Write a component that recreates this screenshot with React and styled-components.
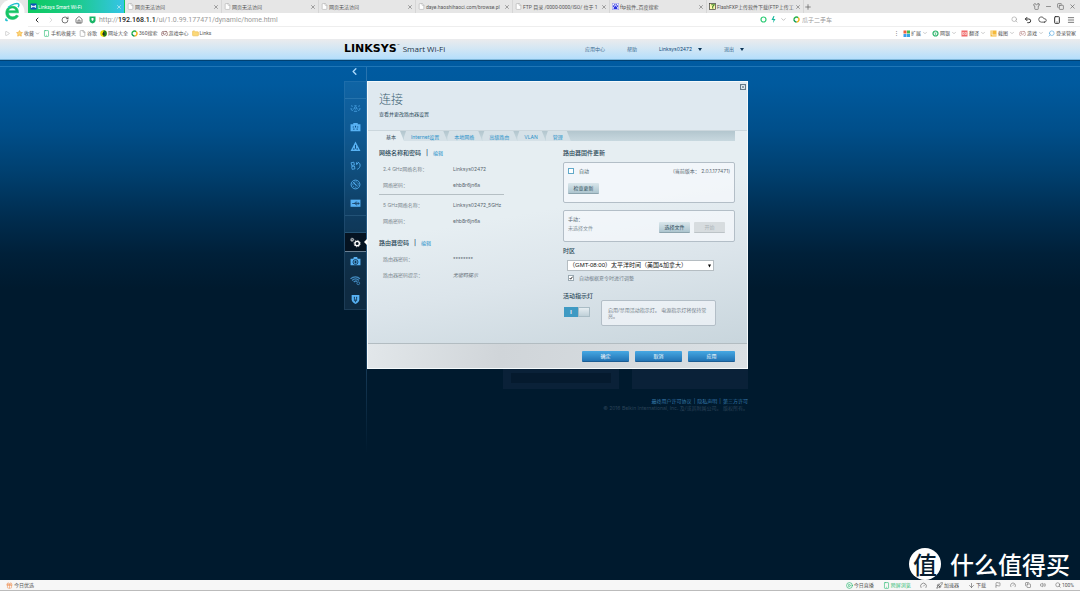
import React, { useState } from "react";
import styled, { createGlobalStyle } from "styled-components";
import {
  ChevronLeft,
  ChevronRight,
  ChevronDown,
  RotateCw,
  House,
  Search,
  Undo2,
  Cloud,
  Smartphone,
  Menu,
  Minus,
  X,
  Plus,
  Copy,
  Shirt,
  File,
  Folder,
  Gift,
  CirclePlay,
  Gauge,
  Rocket,
  ArrowDown,
  Flag,
  Volume2,
  Gamepad2,
  Star,
  Triangle
} from "lucide-react";

const GlobalStyle = createGlobalStyle`
  * {
    box-sizing: border-box;
  }
  body {
    margin: 0;
    font-family: Inter, "Liberation Sans", "Noto Sans CJK SC", sans-serif;
    font-size: 5px;
    line-height: 8px;
  }
  h1, h2, p, dl, dd {
    margin: 0;
  }
  button, input, select {
    font: inherit;
    color: inherit;
    margin: 0;
    padding: 0;
    border: 0;
    background: none;
  }
  a {
    color: inherit;
    text-decoration: none;
  }
  svg {
    display: block;
    flex: none;
  }
`;

const Window = styled.div`
  min-height: 100vh;
  display: flex;
  flex-direction: column;
`;

/* ---------- browser ---------- */

const Chrome = styled.div`
  display: grid;
  grid-template-columns: 28px minmax(0, 1fr);
  background: #fff;
  color: #555;
  font-family: Roboto, "Noto Sans CJK SC", sans-serif;
`;
const BrowserLogo = styled.div`
  grid-row: span 2;
  background: linear-gradient(#e6e6e6 13px, #fff 13px);
  svg {
    width: 26px;
    height: 26px;
  }
`;
const TabBar = styled.div`
  display: flex;
  align-items: center;
  height: 13px;
  min-width: 0;
  background: #e6e6e6;
`;
const Tab = styled.div`
  flex: 0 1 97px;
  min-width: 0;
  height: 13px;
  display: flex;
  align-items: center;
  gap: 1px;
  padding: 0 2px;
  border-right: 1px solid ${p => (p.$active ? "transparent" : "#d6d6d6")};
  color: ${p => (p.$active ? "#fff" : "#555")};
  background: ${p =>
    p.$active ? "linear-gradient(90deg, #0dc95f, #1bcb8a 50%, #35c4e8)" : "none"};
  a {
    flex: 1;
    min-width: 0;
    white-space: nowrap;
  }
`;
const IconButton = styled.button`
  display: flex;
  align-items: center;
  color: ${p => p.$color || "inherit"};
`;
const WindowButtons = styled.div`
  display: flex;
  gap: 5px;
  margin-left: auto;
  padding-right: 4px;
`;
const AddressBar = styled.div`
  display: flex;
  align-items: center;
  gap: 6px;
  height: 14px;
  padding: 0 5px;
  border-bottom: 1px solid #eee;
  color: #333;
`;
const Url = styled.div`
  flex: 1;
  font-size: 7px;
  color: #999;
  white-space: nowrap;
  margin-left: -3px;
  b {
    color: #222;
    font-weight: 500;
  }
`;
const SearchBox = styled.label`
  display: flex;
  align-items: center;
  gap: 2px;
  width: 225px;
  font-size: 6px;
  input {
    flex: 1;
    min-width: 0;
    height: 10px;
    outline: 0;
    &::placeholder {
      color: #999;
      opacity: 1;
    }
  }
`;
const Bookmarks = styled.nav`
  grid-column: 1 / -1;
  display: flex;
  align-items: center;
  gap: 3px;
  height: 12px;
  padding: 0 4px 0 5px;
`;
const Expander = styled(IconButton)`
  width: 8px;
`;
const Bookmark = styled.a`
  display: flex;
  align-items: center;
  gap: 1px;
  white-space: nowrap;
`;
const Tools = styled.div`
  display: flex;
  align-items: center;
  gap: 4px;
  margin-left: auto;
`;
const StatusBar = styled.footer`
  display: flex;
  align-items: center;
  gap: 9px;
  height: 11px;
  padding: 0 6px;
  background: #f7f7f7;
  border-bottom: 1px solid #bbb;
  color: #555;
  font-family: Roboto, "Noto Sans CJK SC", sans-serif;
`;
const StatusItem = styled.button`
  display: flex;
  align-items: center;
  gap: 1px;
  color: ${p => p.$color || "inherit"};
  margin-right: ${p => (p.$push ? "auto" : 0)};
`;

/* ---------- router page ---------- */

const Page = styled.main`
  position: relative;
  flex: 1;
  display: flex;
  flex-direction: column;
  background: linear-gradient(
    #005ca5 0,
    #005a9e 45px,
    #004f8b 90px,
    #003f6e 135px,
    #002c4e 180px,
    #002039 215px,
    #001a2e 250px
  );
`;
const SiteHeader = styled.header`
  background: linear-gradient(#ebebed, #d2e6f4 50%, #b4defc);
  border-bottom: 1px solid #7fb8dc;
`;
const Shell = styled.div`
  width: 100%;
  max-width: 416px;
  margin: 0 auto;
  padding-left: 12px;
`;
const HeaderRow = styled(Shell)`
  display: flex;
  align-items: center;
  height: 20px;
`;
const Brand = styled.a`
  display: flex;
  align-items: baseline;
  gap: 3px;
  color: #1d3347;
  font: 8px/12px "Open Sans", sans-serif;
  white-space: nowrap;
  b {
    color: #000;
    font: bold 11px/12px "DejaVu Sans", sans-serif;
  }
  sup {
    font: 3px/3px "Liberation Sans", sans-serif;
    vertical-align: 6px;
  }
`;
const UserNav = styled.nav`
  display: flex;
  align-items: center;
  gap: 22px;
  margin-left: auto;
  padding-right: 4px;
  color: #3c6d92;
`;
const NavMenu = styled.button`
  display: flex;
  align-items: center;
  gap: 6px;
  color: ${p => (p.$strong ? "#134a78" : "inherit")};
  &::after {
    content: "";
    border: 2px solid transparent;
    border-top: 3px solid #0b3557;
    border-bottom: 0;
  }
`;
const Rule = styled.div`
  height: 7px;
  border-bottom: 1px solid rgba(90, 170, 220, 0.35);
  border-top: 1px solid #014273;
`;
const Layout = styled(Shell)`
  display: grid;
  grid-template-columns: 23px minmax(0, 1fr);
  min-height: 386px;
`;
const Side = styled.aside`
  border-right: 1px solid;
  border-image: linear-gradient(rgba(80, 140, 190, 0.5) 60%, transparent) 1;
`;
const BackButton = styled.button`
  display: flex;
  width: 100%;
  height: 14px;
  padding: 0 0 6px 5px;
  align-items: center;
  color: #a9d8fb;
`;
const SideMenu = styled.nav`
  display: flex;
  flex-direction: column;
  padding: 16px 0 0;
  background: rgba(120, 170, 215, 0.12);
  border: 1px solid rgba(120, 170, 215, 0.14);
  border-right: 0;
`;
const SideGroup = styled.div`
  border-top: 1px solid rgba(120, 180, 220, 0.22);
  border-bottom: ${p => (p.$closed ? "1px solid rgba(120, 180, 220, 0.18)" : 0)};
  padding-bottom: ${p => (p.$closed ? "2px" : 0)};
  margin-bottom: ${p => (p.$closed ? "16px" : 0)};
`;
const SideLink = styled.a`
  display: flex;
  align-items: center;
  justify-content: center;
  position: relative;
  height: 19px;
  color: ${p => (p.$active ? "#fff" : "#58b2f4")};
  background: ${p => (p.$active ? "#051321" : "none")};
  border-bottom: ${p => (p.$active ? "1px solid #6c8295" : 0)};
  &::after {
    content: "";
    display: ${p => (p.$active ? "block" : "none")};
    position: absolute;
    right: -1px;
    border: 3px solid transparent;
    border-right-color: #fff;
    border-left: 0;
  }
  svg {
    width: 11px;
    height: 11px;
  }
`;

const Dialog = styled.section`
  margin-top: 14px;
  border: 1px solid #f5fafc;
  background: linear-gradient(170deg, #e6eef2 45%, #dce5eb 65%, #c9d6dd 92%);
  color: #5a6972;
`;
const DialogHead = styled.div`
  display: flex;
  justify-content: space-between;
  align-items: flex-start;
  height: 49px;
  padding: 1px 1px 0 11px;
  background: #dfe9f0;
  border-bottom: 1px solid #ccd7dd;
  h1 {
    margin-top: 8px;
    color: #3d6273;
    font: 300 12px/16px "Noto Sans CJK SC", sans-serif;
  }
  p {
    margin-top: 3px;
    color: #304d5c;
  }
`;
const CloseButton = styled.button`
  width: 6px;
  height: 6px;
  margin-top: 1px;
  border: 1px solid #647988;
  color: #405564;
  display: flex;
  align-items: center;
  justify-content: center;
`;
const DialogTabs = styled.div`
  display: flex;
  height: 10px;
  margin: 0 12px 0 11px;
  background: linear-gradient(#b3c6ce, #c8d8df);
`;
const DialogTab = styled.button`
  padding: 2px 8px 0 7px;
  line-height: 8px;
  white-space: nowrap;
  color: ${p => (p.$active ? "#3b5361" : "#2a92ca")};
  background: ${p => (p.$active ? "#e6eef2" : "#d6e1e7")};
  clip-path: polygon(
    ${p => (p.$active ? 0 : 2)}px 0,
    calc(100% - 4px) 0,
    100% 100%,
    0 100%,
    0 6px
  );
`;
const DialogBody = styled.div`
  display: grid;
  grid-template-columns: 184px minmax(0, 1fr);
  padding: 7px 12px 17px 11px;
`;
const Title = styled.h2`
  display: flex;
  gap: 5px;
  margin-top: ${p => p.$top || 0}px;
  color: #294757;
  font-size: 6px;
  font-weight: 500;
  line-height: 10px;
  white-space: nowrap;
  a {
    font-size: 5px;
    font-weight: 400;
    color: #1d8fc8;
  }
`;
const Fields = styled.dl`
  display: grid;
  grid-template-columns: 70px 1fr;
  width: 125px;
  margin-top: ${p => (p.$divided ? 2 : 3)}px;
  padding-left: 4px;
  line-height: 16px;
  white-space: nowrap;
  color: #7d8990;
  dd {
    color: #59666f;
  }
`;
const Divider = styled.hr`
  width: 125px;
  margin: 1px 0 0;
  border: 0;
  border-top: 1px solid #b5bfc4;
`;
const Box = styled.div`
  padding: 4px 4px 8px;
  border: 1px solid #b3bec7;
  border-radius: 2px;
  background: rgba(250, 252, 255, 0.6);
  margin-top: ${p => p.$top}px;
`;
const Row = styled.div`
  display: flex;
  align-items: ${p => (p.$bottom ? "flex-end" : "center")};
  gap: 4px;
`;
const Check = styled.label`
  display: flex;
  align-items: center;
  gap: 5px;
  color: ${p => (p.$soft ? "#74818a" : "#4d5f6b")};
  margin: ${p => (p.$soft ? "3px 0 0 5px" : 0)};
  input {
    appearance: none;
    width: 6px;
    height: 6px;
    border: 1px solid ${p => (p.$soft ? "#9aa9b2" : "#62a9c9")};
    background: #fff;
    &:checked {
      background: #fff
        url("data:image/svg+xml,%3Csvg xmlns='http://www.w3.org/2000/svg' viewBox='0 0 6 6'%3E%3Cpath d='M1 3l1.5 1.8L5.4 1' fill='none' stroke='%23000' stroke-width='1.2'/%3E%3C/svg%3E");
    }
  }
`;
const Version = styled.span`
  margin-left: auto;
`;
const SmallButton = styled.button`
  width: 31px;
  height: 11px;
  line-height: 10px;
  color: #2c4b59;
  background: linear-gradient(#d9e6eb, #adc5cf);
  border-bottom: 1px solid #8ca4ae;
  border-radius: 1px;
  &:disabled {
    color: #adb5b9;
    background: #d7dcdf;
    border-color: #bcc3c7;
  }
`;
const CheckUpdate = styled(SmallButton)`
  display: block;
  margin-top: 8px;
`;
const FileState = styled.div`
  flex: 1;
  line-height: 9px;
  color: #86929a;
  p:first-child {
    color: #526570;
  }
`;
const FileButtons = styled(Row)`
  padding-right: 5px;
`;
const ZoneSelect = styled.select`
  display: block;
  width: 147px;
  height: 11px;
  margin: 4px 0 0 4px;
  padding: 0 8px 0 1px;
  appearance: none;
  font-family: "Liberation Sans", "Noto Sans CJK SC", sans-serif;
  font-size: 6px;
  line-height: 9px;
  color: #111;
  border: 1px solid #b5bdc2;
  background: #fff
    url("data:image/svg+xml,%3Csvg xmlns='http://www.w3.org/2000/svg' viewBox='0 0 4 4'%3E%3Cpath d='M0 0h4l-2 4z'/%3E%3C/svg%3E")
    no-repeat right 2px center / 3px 4px;
`;
const LightRow = styled.div`
  display: grid;
  grid-template-columns: 38px 115px;
  margin-top: 9px;
`;
const Toggle = styled.button`
  display: flex;
  width: 26px;
  height: 10px;
  margin: 6px 0 0 1px;
  color: #fff;
  font-weight: 700;
  line-height: 10px;
  background: #3f9ac3;
  span {
    flex: 1;
  }
  i {
    width: 12px;
    height: 10px;
    border: 1px solid #a9bcc5;
    background: linear-gradient(#e5edf1, #bfd0d8);
  }
`;
const Hint = styled(Box)`
  padding: 6px;
  line-height: 6px;
  color: #74818a;
`;
const DialogFoot = styled.div`
  display: flex;
  justify-content: flex-end;
  gap: 6px;
  padding: 7px 12px 6px;
  border-top: 1px solid #b2bcc1;
  background: linear-gradient(100deg, #e2e7ea, #d0d5d9 35%, #dae0e4);
`;
const ActionButton = styled.button`
  width: 47px;
  height: 11px;
  color: #fff;
  line-height: 10px;
  border-radius: 1px;
  background: linear-gradient(#46a8e3, #2274b5);
  border-bottom: 1px solid #1b5d94;
`;
const Cards = styled.div`
  display: flex;
  justify-content: flex-end;
  gap: 13px;
  height: 20px;
`;
const Card = styled.div`
  width: 116px;
  padding: 4px 8px;
  background: #0a2138;
  &::after {
    content: "";
    display: block;
    height: 10px;
    background: ${p => (p.$bar ? "#051a2e" : "none")};
  }
`;
const Legal = styled.div`
  margin-top: 9px;
  text-align: right;
  line-height: 7px;
  color: #2b4358;
  nav {
    display: flex;
    justify-content: flex-end;
    gap: 2px;
    color: #3577a9;
  }
`;
const Watermark = styled.div`
  position: absolute;
  right: 10px;
  bottom: 0;
  display: flex;
  align-items: center;
  gap: 9px;
  color: #fff;
  font: 500 24px/32px "Noto Sans CJK SC", sans-serif;
  span {
    width: 32px;
    height: 32px;
    border-radius: 50%;
    background: #fff;
    color: #071c2f;
    text-align: center;
    line-height: 31px;
  }
`;

/* ---------- icons ---------- */

const ELogo = () => (
  <svg viewBox="0 0 26 26">
    <circle cx="12" cy="12" r="12.5" fill="#fff" />
    <path
      d="M18.5 12.8H8.4c.2 2.6 2 4 4.3 4 1.6 0 2.7-.5 3.5-1.7l2.2.8c-1.2 2.3-3.2 3.5-5.9 3.5-4 0-6.7-2.7-6.7-6.7 0-3.8 2.7-6.5 6.5-6.5 4 0 6.4 2.6 6.2 6.6zM8.6 10.7h7.1c-.3-1.8-1.5-2.7-3.4-2.7-1.9 0-3.2 1-3.7 2.7z"
      fill="#16c566"
      stroke="#16c566"
      strokeWidth=".6"
    />
    <path
      d="M6.5 18.5c-1.4 1.5-.8 2.4 1.2 1.7M8 7.5c4-3.6 9.5-5 10.7-3.4.5.8.2 1.9-.7 3.2"
      fill="none"
      stroke="#20bfd0"
      strokeWidth="1.5"
    />
  </svg>
);
const Dot = ({ color, children }) => (
  <svg width="7" height="7" viewBox="0 0 14 14">
    <circle cx="7" cy="7" r="5" fill="none" stroke={color} strokeWidth="2.4" />
    {children}
  </svg>
);
const Ring360 = () => (
  <svg width="7" height="7" viewBox="0 0 14 14" fill="none" strokeWidth="3">
    <path d="M2 7a5 5 0 0 1 8.5-3.5" stroke="#29b34a" />
    <path d="M10.5 3.5A5 5 0 0 1 7 12" stroke="#f6b51e" />
    <path d="M7 12a5 5 0 0 1-5-5" stroke="#19a05c" />
  </svg>
);
const Shield = () => (
  <svg width="7" height="8" viewBox="0 0 14 16">
    <path d="M1 1h12v8c0 3-3 5-6 6-3-1-6-3-6-6z" fill="#18b566" />
    <path d="M5 4h4v4L7 10 5 8z" fill="#fff" />
  </svg>
);
const Square = ({ color, children }) => (
  <svg width="7" height="7" viewBox="0 0 14 14">
    <rect x="1" y="1" width="12" height="12" fill={color} />
    {children}
  </svg>
);
const HiLink = () => (
  <Square color="#0b53b8">
    <path d="M3 4v6M11 4v6M5.5 5v4M8.5 5v4M3 7h8" fill="none" stroke="#fff" strokeWidth="1.5" />
  </Square>
);
const Paw = () => (
  <svg width="7" height="7" viewBox="0 0 16 16" fill="#2932e1">
    <rect x=".5" y=".5" width="15" height="15" rx="1" fill="#fff" stroke="#2932e1" />
    <ellipse cx="3.5" cy="7" rx="1.5" ry="2" />
    <ellipse cx="6.3" cy="4" rx="1.4" ry="2" />
    <ellipse cx="9.8" cy="4" rx="1.4" ry="2" />
    <ellipse cx="12.5" cy="7" rx="1.5" ry="2" />
    <path d="M8 7c2 0 5 3.5 4.5 5.5-.5 2-3 1-4.5 1s-4 1-4.5-1C3 10.5 6 7 8 7z" />
  </svg>
);
const FlashIcon = () => (
  <svg width="7" height="7" viewBox="0 0 16 16">
    <rect x="1" y="1" width="14" height="14" fill="#fff8b0" stroke="#333" strokeWidth="1.5" />
    <path d="M5 4h7L8 9l1 4" fill="none" stroke="#4b8e2a" strokeWidth="2.5" />
  </svg>
);
const HaoIcon = () => (
  <svg width="7" height="7" viewBox="0 0 14 14">
    <circle cx="7" cy="7" r="6.5" fill="#f0dc00" />
    <path d="M7 .5a6.5 6.5 0 0 1 0 13V9z" fill="#1e7a1e" />
    <path d="M4 8h6M7 4v7" stroke="#222" strokeWidth="1.8" />
  </svg>
);
const AppsIcon = () => (
  <svg width="7" height="7" viewBox="0 0 14 14">
    <rect width="6" height="6" x="1" y="1" fill="#f0603c" />
    <rect width="6" height="6" x="8" y="1" fill="#45b94e" />
    <rect width="6" height="6" x="1" y="8" fill="#3c9fec" />
    <rect width="6" height="6" x="8" y="8" fill="#38a5e6" />
  </svg>
);

const sideIcons = {
  devices: (
    <g fill="none" stroke="currentColor" strokeWidth="1.5" opacity=".85">
      <circle cx="10" cy="9" r="2" />
      <path d="M5 6L2 5M2 9v3l3 2M15 6l3-1M18 9v3l-3 2M7 15h6M8 5h4M5 11h2M13 11h2" />
    </g>
  ),
  guest: (
    <g>
      <path d="M1 4h5V2h8v2h5v13H1z" fill="currentColor" />
      <path d="M5 8h2v2H5zM9 7h2v3H9zM13 8h2v2h-2zM6 12h2v2H6zM12 12h2v2h-2z" fill="#0b4d84" />
    </g>
  ),
  parental: (
    <g>
      <path d="M10 1l9 17H1z" fill="currentColor" />
      <path d="M10 7v7M7 16v-3M13 16v-3" stroke="#063e6d" strokeWidth="1.6" />
    </g>
  ),
  media: (
    <g fill="none" stroke="currentColor" strokeWidth="1.5">
      <path d="M2 5l5-1 1 5-5 1zM3 12l5-1 1 5-5 1z" />
      <path d="M12 4v4l3-3M14 4c4 1 5 4 4 8-1 3-3 4-5 5M11 7h3" />
    </g>
  ),
  speed: (
    <g fill="none" stroke="currentColor" strokeWidth="1.6">
      <circle cx="10" cy="10" r="8" />
      <circle cx="10" cy="10" r="5" strokeDasharray="2 1.5" />
      <path d="M6 6l6 6" strokeWidth="2" />
    </g>
  ),
  usb: (
    <g>
      <path d="M1 3h18v13H1z" fill="currentColor" />
      <path
        d="M4 10h12M8 10l2-2.5h3M9 10l2 2.5h2M14 8l3 2-3 2"
        stroke="#10304e"
        strokeWidth="1.3"
        fill="none"
      />
    </g>
  ),
  gears: (
    <g fill="none" stroke="currentColor">
      <circle cx="13" cy="12" r="4" strokeWidth="2.5" />
      <circle cx="13" cy="12" r="5.8" strokeWidth="1.5" strokeDasharray="2 2.55" />
      <circle cx="4" cy="5" r="2" strokeWidth="1.5" />
      <circle cx="4" cy="5" r="3.2" strokeWidth="1" strokeDasharray="1.3 1.2" />
    </g>
  ),
  trouble: (
    <g>
      <path d="M1 5h5l1-3h6l1 3h5v12H1z" fill="currentColor" />
      <circle cx="10" cy="11" r="4.5" fill="none" stroke="#0b2c47" strokeWidth="1.5" />
      <path d="M10 8.5v5M7.5 11h5" stroke="#0b2c47" strokeWidth="1.6" />
    </g>
  ),
  wireless: (
    <g fill="none" stroke="currentColor" strokeWidth="2.4" opacity=".7">
      <path d="M1 7c5-5 13-5 17 0M4 10c3-4 9-4 12 0M7 13c1-2 4-3 6-1" />
      <circle cx="15" cy="15" r="2.5" strokeWidth="1.6" />
    </g>
  ),
  security: (
    <g>
      <path d="M3 2h14v8c0 4-4 7-7 8-3-1-7-4-7-8z" fill="currentColor" />
      <path d="M8 6v7M12 6v7M7 6h2M11 6h2M10 10v5" stroke="#0b2c47" strokeWidth="1.4" />
    </g>
  )
};
const SideItem = ({ name, label, active }) => (
  <SideLink href="#" $active={active} aria-label={label}>
    <svg viewBox="0 0 20 20">{sideIcons[name]}</svg>
  </SideLink>
);

/* ---------- data ---------- */

const tabs = [
  { text: "Linksys Smart Wi-Fi", icon: <HiLink />, active: true },
  { text: "网页无法访问" },
  { text: "网页无法访问" },
  { text: "网页无法访问" },
  { text: "daye.haoshihaoci.com/browse.pl" },
  { text: "FTP 目录 /0000-0000/ISO/ 位于 1" },
  { text: "ftp软件_百度搜索", icon: <Paw /> },
  { text: "FlashFXP上传软件下载(FTP上传工", icon: <FlashIcon /> }
];
const bookmarks = [
  { text: "手机收藏夹", icon: <Smartphone size={7} color="#1fb86c" /> },
  { text: "谷歌", icon: <File size={7} color="#999" /> },
  { text: "网址大全", icon: <HaoIcon /> },
  { text: "360搜索", icon: <Ring360 /> },
  { text: "游戏中心", icon: <Gamepad2 size={7} color="#7b4a4a" /> },
  { text: "Links", icon: <Folder size={7} color="#e8b84a" fill="#fcd978" /> }
];
const tools = [
  { text: "扩展", icon: <AppsIcon /> },
  {
    text: "网银",
    icon: (
      <Dot color="#2cb56b">
        <path d="M5 4l2 3 2-3M7 7v4M5 8h4" stroke="#2cb56b" fill="none" />
      </Dot>
    )
  },
  {
    text: "翻译",
    icon: (
      <Square color="#f06a6a">
        <path d="M3 5h3v4H3zM8 5h3v4H8z" fill="none" stroke="#fff" />
      </Square>
    )
  },
  {
    text: "截图",
    icon: (
      <Square color="#f5b93a">
        <path d="M4 1v9h9" fill="none" stroke="#fff" strokeWidth="1.5" />
      </Square>
    )
  },
  { text: "游戏", icon: <Gamepad2 size={7} color="#b98484" /> }
];
const dialogTabs = ["基本", "Internet设置", "本地网络", "高级路由", "VLAN", "管理"];

const BrowserChrome = () => (
  <Chrome>
    <BrowserLogo>
      <ELogo />
    </BrowserLogo>
    <TabBar>
      {tabs.map((t, i) => (
        <Tab key={i} $active={t.active}>
          {t.icon || <File size={7} color="#aaa" fill="#fff" />}
          <a href="#">{t.text}</a>
          <IconButton aria-label="关闭">
            <X size={6} />
          </IconButton>
        </Tab>
      ))}
      <IconButton aria-label="新标签">
        <Plus size={8} />
      </IconButton>
      <WindowButtons>
        <IconButton aria-label="皮肤">
          <Shirt size={7} />
        </IconButton>
        <IconButton aria-label="最小化">
          <Minus size={7} />
        </IconButton>
        <IconButton aria-label="还原">
          <Copy size={7} />
        </IconButton>
        <IconButton aria-label="关闭窗口">
          <X size={7} />
        </IconButton>
      </WindowButtons>
    </TabBar>
    <AddressBar>
      <IconButton aria-label="后退">
        <ChevronLeft size={8} strokeWidth={3} />
      </IconButton>
      <IconButton aria-label="前进" $color="#ccc">
        <ChevronRight size={8} />
      </IconButton>
      <IconButton aria-label="刷新">
        <RotateCw size={8} />
      </IconButton>
      <IconButton aria-label="主页">
        <House size={8} />
      </IconButton>
      <Shield />
      <Url role="textbox" aria-label="地址">
        http://<b>192.168.1.1</b>/ui/1.0.99.177471/dynamic/home.html
      </Url>
      <Row>
        <Dot color="#2ccb74" />
        <svg width="5" height="7" viewBox="0 0 10 14">
          <path d="M5 0L1 8h4l-1 6 5-8H5l2-6z" fill="#17b89c" />
        </svg>
        <ChevronDown size={7} color="#999" />
      </Row>
      <SearchBox>
        <Ring360 />
        <input aria-label="搜索" placeholder="瓜子二手车" />
        <Search size={7} color="#999" />
      </SearchBox>
      <IconButton aria-label="撤销">
        <Undo2 size={8} strokeWidth={3} />
      </IconButton>
      <IconButton aria-label="云">
        <Cloud size={9} />
      </IconButton>
      <IconButton aria-label="手机">
        <Smartphone size={8} strokeWidth={3} />
      </IconButton>
      <IconButton aria-label="菜单">
        <Menu size={8} />
      </IconButton>
    </AddressBar>
    <Bookmarks>
      <Expander aria-label="展开">
        <Triangle size={5} color="#999" transform="rotate(90)" />
      </Expander>
      <Bookmark href="#">
        <Star size={7} color="#f2a83a" fill="#fbd675" />
        收藏
        <ChevronDown size={5} />
      </Bookmark>
      {bookmarks.map(b => (
        <Bookmark href="#" key={b.text}>
          {b.icon}
          {b.text}
        </Bookmark>
      ))}
      <Tools>
        <span>⋮</span>
        {tools.map(t => (
          <Bookmark as="button" key={t.text}>
            {t.icon}
            {t.text}
            <ChevronDown size={6} color="#999" />
          </Bookmark>
        ))}
        <Bookmark href="#">
          <Search size={7} color="#4aa3e0" transform="scale(-1 1)" />
          登录管家
        </Bookmark>
      </Tools>
    </Bookmarks>
  </Chrome>
);

const Settings = () => {
  const [auto, setAuto] = useState(false);
  const [dst, setDst] = useState(true);
  const [light, setLight] = useState(true);
  return (
    <Dialog role="dialog" aria-labelledby="dialog-title">
      <DialogHead>
        <div>
          <h1 id="dialog-title">连接</h1>
          <p>查看并更改路由器设置</p>
        </div>
        <CloseButton aria-label="关闭">
          <X size={4} strokeWidth={3} />
        </CloseButton>
      </DialogHead>
      <DialogTabs role="tablist">
        {dialogTabs.map((t, i) => (
          <DialogTab key={t} role="tab" aria-selected={i === 0} $active={i === 0}>
            {t}
          </DialogTab>
        ))}
      </DialogTabs>
      <DialogBody>
        <div>
          <Title>
            网络名称和密码 <span>|</span> <a href="#">编辑</a>
          </Title>
          <Fields>
            <dt>2.4 GHz网络名称：</dt>
            <dd>Linksys02472</dd>
            <dt>网络密码：</dt>
            <dd>ehb8r6jn6a</dd>
          </Fields>
          <Divider />
          <Fields $divided>
            <dt>5 GHz网络名称：</dt>
            <dd>Linksys02472_5GHz</dd>
            <dt>网络密码：</dt>
            <dd>ehb8r6jn6a</dd>
          </Fields>
          <Title $top={9}>
            路由器密码 <span>|</span> <a href="#">编辑</a>
          </Title>
          <Fields>
            <dt>路由器密码：</dt>
            <dd>********</dd>
            <dt>路由器密码提示：</dt>
            <dd>
              <em>无密码提示</em>
            </dd>
          </Fields>
        </div>
        <div>
          <Title>路由器固件更新</Title>
          <Box $top={4}>
            <Row>
              <Check>
                <input type="checkbox" checked={auto} onChange={() => setAuto(!auto)} />
                自动
              </Check>
              <Version>(当前版本： 2.0.1.177471)</Version>
            </Row>
            <CheckUpdate>检查更新</CheckUpdate>
          </Box>
          <Box $top={7}>
            <Row $bottom>
              <FileState>
                <p>手动：</p>
                <p>未选择文件</p>
              </FileState>
              <FileButtons>
                <SmallButton>选择文件</SmallButton>
                <SmallButton disabled>开始</SmallButton>
              </FileButtons>
            </Row>
          </Box>
          <Title as="label" htmlFor="zone" $top={4}>
            时区
          </Title>
          <ZoneSelect id="zone">
            <option>（GMT-08:00）太平洋时间（美国&amp;加拿大）</option>
          </ZoneSelect>
          <Check $soft>
            <input type="checkbox" checked={dst} onChange={() => setDst(!dst)} />
            自动根据夏令时进行调整
          </Check>
          <LightRow>
            <div>
              <Title>活动指示灯</Title>
              <Toggle
                role="switch"
                aria-label="活动指示灯"
                aria-checked={light}
                onClick={() => setLight(!light)}
              >
                <span>I</span>
                <i />
              </Toggle>
            </div>
            <Hint $top={9}>启用/禁用活动指示灯。 电源指示灯将保持常亮。</Hint>
          </LightRow>
        </div>
      </DialogBody>
      <DialogFoot>
        <ActionButton>确定</ActionButton>
        <ActionButton>取消</ActionButton>
        <ActionButton>应用</ActionButton>
      </DialogFoot>
    </Dialog>
  );
};

export default function App() {
  return (
    <Window>
      <GlobalStyle />
      <BrowserChrome />
      <Page>
        <SiteHeader>
          <HeaderRow>
            <Brand href="#">
              <span>
                <b>LINKSYS</b>
                <sup>™</sup>
              </span>
              Smart Wi-Fi
            </Brand>
            <UserNav>
              <a href="#">应用中心</a>
              <a href="#">帮助</a>
              <NavMenu $strong>Linksys02472</NavMenu>
              <NavMenu>退出</NavMenu>
            </UserNav>
          </HeaderRow>
        </SiteHeader>
        <Rule />
        <Layout>
          <Side>
            <BackButton aria-label="返回">
              <ChevronLeft size={11} strokeWidth={3} />
            </BackButton>
            <SideMenu>
              <SideGroup $closed>
                <SideItem name="devices" label="设备列表" />
                <SideItem name="guest" label="访客访问" />
                <SideItem name="parental" label="家长控制" />
                <SideItem name="media" label="媒体优先级" />
                <SideItem name="speed" label="速度测试" />
                <SideItem name="usb" label="外部存储" />
              </SideGroup>
              <SideGroup>
                <SideItem name="gears" label="连接" active />
                <SideItem name="trouble" label="故障排除" />
                <SideItem name="wireless" label="无线" />
                <SideItem name="security" label="安全" />
              </SideGroup>
            </SideMenu>
          </Side>
          <div>
            <Settings />
            <Cards>
              <Card $bar />
              <Card />
            </Cards>
            <Legal>
              <nav>
                <a href="#">最终用户许可协议</a>|<a href="#">隐私声明</a>|
                <a href="#">第三方许可</a>
              </nav>
              <p>© 2016 Belkin International, Inc. 及/或其附属公司。 版权所有。</p>
            </Legal>
          </div>
        </Layout>
        <Watermark>
          <span>值</span>什么值得买
        </Watermark>
      </Page>
      <StatusBar>
        <StatusItem $push>
          <Gift size={7} color="#f0945a" />
          今日优选
        </StatusItem>
        <StatusItem>
          <CirclePlay size={7} color="#12b060" />
          今日直播
        </StatusItem>
        <StatusItem $color="#1fb86c">
          <Smartphone size={7} />
          跨屏浏览
        </StatusItem>
        <StatusItem aria-label="性能">
          <Gauge size={7} />
        </StatusItem>
        <StatusItem>
          <Rocket size={7} />
          加速器
        </StatusItem>
        <StatusItem>
          <ArrowDown size={7} />
          下载
        </StatusItem>
        <StatusItem aria-label="标记">
          <Flag size={6} />
        </StatusItem>
        <StatusItem aria-label="浏览器模式">
          <Gauge size={6} />
        </StatusItem>
        <StatusItem aria-label="窗口">
          <Copy size={6} />
        </StatusItem>
        <StatusItem aria-label="声音">
          <Volume2 size={6} />
        </StatusItem>
        <StatusItem>
          <Search size={6} />
          100%
        </StatusItem>
      </StatusBar>
    </Window>
  );
}
